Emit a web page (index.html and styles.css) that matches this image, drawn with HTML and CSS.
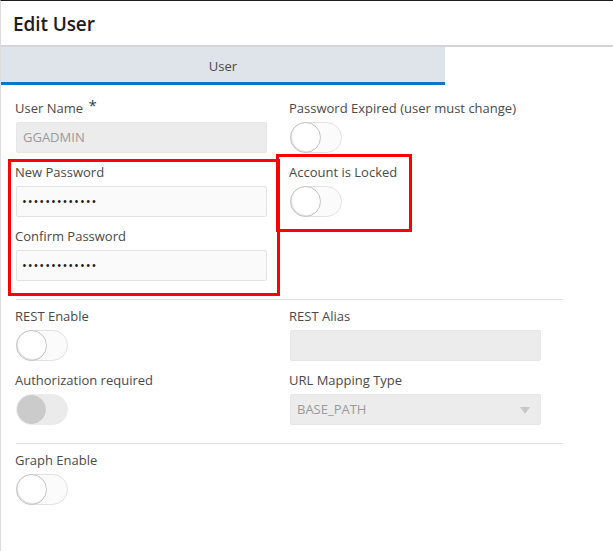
FILE: index.html
```html
<!DOCTYPE html>
<html>
<head>
<meta charset="utf-8">
<link rel="stylesheet" href="styles.css">
</head>
<body>
<div class="dialog">
  <header class="dlg-head"><h1>Edit User</h1></header>
  <nav class="tabs"><div class="tab active">User</div></nav>
  <div class="form">
    <div class="grid">
      <div class="field">
        <label>User Name <span class="req">*</span></label>
        <div class="input disabled">GGADMIN</div>
      </div>
      <div class="field">
        <label>Password Expired (user must change)</label>
        <div class="switch"><span class="knob"></span></div>
      </div>
      <div class="field">
        <label>New Password</label>
        <div class="input pw">•••••••••••••</div>
      </div>
      <div class="field">
        <label>Account is Locked</label>
        <div class="switch"><span class="knob"></span></div>
      </div>
      <div class="field">
        <label>Confirm Password</label>
        <div class="input pw">•••••••••••••</div>
      </div>
      <div class="field"></div>
    </div>
    <hr class="sep">
    <div class="grid">
      <div class="field">
        <label>REST Enable</label>
        <div class="switch"><span class="knob"></span></div>
      </div>
      <div class="field">
        <label>REST Alias</label>
        <div class="input disabled"></div>
      </div>
      <div class="field">
        <label>Authorization required</label>
        <div class="switch off-disabled"><span class="knob"></span></div>
      </div>
      <div class="field">
        <label>URL Mapping Type</label>
        <div class="input disabled select">BASE_PATH<span class="caret"></span></div>
      </div>
    </div>
    <hr class="sep">
    <div class="grid">
      <div class="field">
        <label>Graph Enable</label>
        <div class="switch"><span class="knob"></span></div>
      </div>
    </div>
  </div>
  <div class="mark mark1"></div>
  <div class="mark mark2"></div>
</div>
</body>
</html>
```
FILE: styles.css
```css
* { box-sizing: border-box; }
html, body { margin: 0; padding: 0; background: #fff; }
body {
  font-family: "Open Sans", "Noto Sans", sans-serif;
  color: #4a4a4a;
  width: 613px;
  height: 551px;
  overflow: hidden;
}
.dialog {
  position: relative;
  height: 551px;
  border-top: 1px solid #1e1e1e;
  border-left: 1px solid #dcdcdc;
}
.dlg-head {
  height: 46px;
  border-bottom: 2px solid #d4d4d4;
  padding: 10px 0 0 12px;
}
.dlg-head h1 {
  margin: 0;
  font-size: 19px;
  font-weight: 600;
  color: #1d1d1d;
  letter-spacing: -0.1px;
  line-height: 26px;
}
.tabs { display: flex; }
.tab {
  width: 444px;
  height: 38px;
  background: #dfe3ea;
  border-bottom: 3px solid #0778c9;
  text-align: center;
  font-size: 13px;
  padding-top: 4px;
  line-height: 31px;
  color: #4a4a4a;
}
.form { padding: 14px 0 0 14px; width: 563px; }
.grid {
  display: grid;
  grid-template-columns: 274px 274px;
  row-gap: 0;
}
.field { padding-right: 23px; height: 64px; }
label {
  display: block;
  font-size: 13px;
  line-height: 18px;
  height: 18px;
  margin-bottom: 5px;
  color: #4a4a4a;
  white-space: nowrap;
}
.req { color: #1f3a60; font-size: 15px; vertical-align: top; position: relative; top: -3px; margin-left: 2px; }
.input {
  height: 31px;
  width: 251px;
  margin-left: 1px;
  border: 1px solid #e3e3e3;
  background: #fafafa;
  border-radius: 2px;
  font-size: 13px;
  line-height: 29px;
  padding: 0 6px;
  color: #333;
}
.input.disabled { background: #ececec; color: #9a9a9a; border-color: #e6e6e6; }
.input.pw { font-size: 13px; letter-spacing: 0.9px; color: #222; padding-left: 5px; }
.select { position: relative; }
.caret {
  position: absolute;
  right: 10px;
  top: 12px;
  width: 0; height: 0;
  border-left: 5px solid transparent;
  border-right: 5px solid transparent;
  border-top: 7px solid #c8c8c8;
}
.switch {
  width: 52px;
  height: 31px;
  margin-left: 1px;
  border: 1px solid #e2e2e2;
  border-radius: 16px;
  background: #fbfbfb;
  position: relative;
}
.knob {
  position: absolute;
  left: -1px; top: -1px;
  width: 31px; height: 31px;
  border-radius: 50%;
  background: #fff;
  border: 1px solid #c4c4c4;
  box-shadow: inset 1px -1px 1px rgba(0,0,0,0.12);
}
.switch.off-disabled { background: #ebebeb; border-color: #ebebeb; }
.switch.off-disabled .knob { background: #cbcbcb; border-color: #cbcbcb; box-shadow: none; width: 29px; height: 29px; left: 0; top: 0; }
.sep {
  border: 0;
  border-top: 1px solid #e1e1e1;
  margin: 8px 0 7px 1px;
  width: 547px;
}
.mark {
  position: absolute;
  border: 3px solid #f00;
  pointer-events: none;
}
.mark1 { left: 7px; top: 158px; width: 272px; height: 137px; }
.mark2 { left: 275px; top: 153px; width: 136px; height: 78px; }
```
